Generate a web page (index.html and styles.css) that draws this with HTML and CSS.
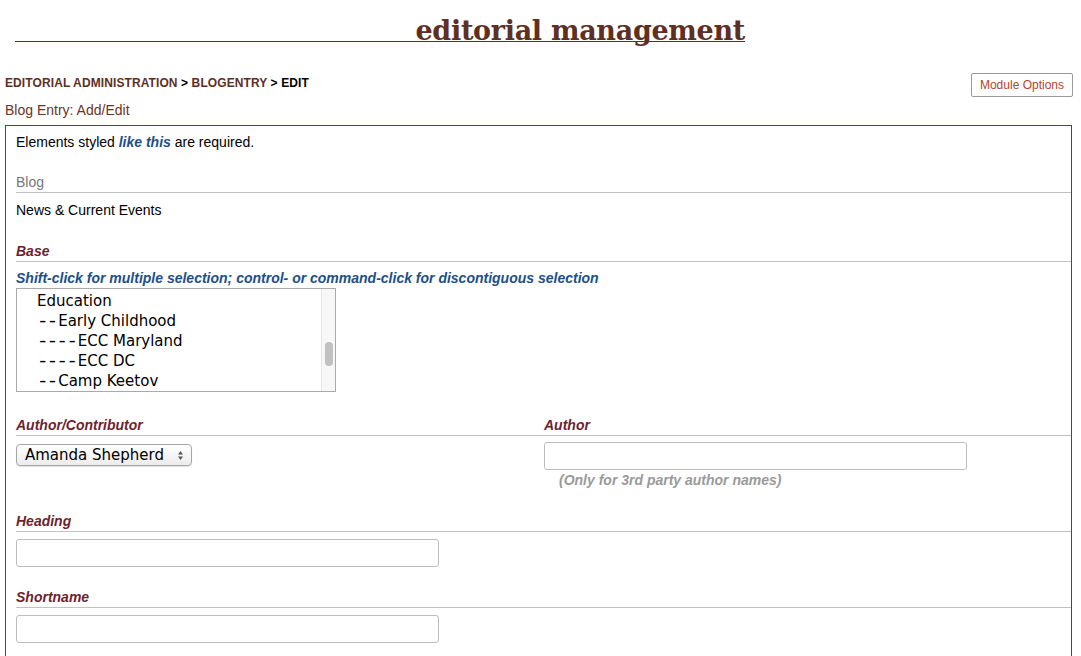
FILE: index.html
```html
<!DOCTYPE html>
<html>
<head>
<meta charset="utf-8">
<title>Editorial Management</title>
<link rel="stylesheet" href="styles.css">
</head>
<body>
<div class="page">
  <h1 class="site-title">editorial management</h1>

  <div class="crumb-row">
    <div class="crumbs"><a href="#">EDITORIAL ADMINISTRATION</a> &gt; <a href="#">BLOGENTRY</a> &gt; EDIT</div>
    <button class="module-btn">Module Options</button>
  </div>

  <div class="page-sub">Blog Entry: Add/Edit</div>

  <div class="form-box">
    <div class="req-note">Elements styled <span class="req">like this</span> are required.</div>

    <div class="field blog-field">
      <div class="label plain">Blog</div>
      <div class="value">News &amp; Current Events</div>
    </div>

    <div class="field base-field">
      <div class="label">Base</div>
      <div class="hint-blue">Shift-click for multiple selection; control- or command-click for discontiguous selection</div>
      <div class="listbox">
        <div class="options">
          <div class="opt">Education</div>
          <div class="opt"><span class="dash">--</span>Early Childhood</div>
          <div class="opt"><span class="dash">----</span>ECC Maryland</div>
          <div class="opt"><span class="dash">----</span>ECC DC</div>
          <div class="opt"><span class="dash">--</span>Camp Keetov</div>
        </div>
        <div class="scrollbar"><div class="thumb"></div></div>
      </div>
    </div>

    <div class="field two-col">
      <div class="col">
        <div class="label">Author/Contributor</div>
        <div class="select">
          <span class="select-text">Amanda Shepherd</span>
          <span class="arrows">
            <svg width="7" height="11" viewBox="0 0 7 11"><path d="M3.5 1 L6 4.5 H1 Z" fill="#555"/><path d="M3.5 10 L6 6.5 H1 Z" fill="#555"/></svg>
          </span>
        </div>
      </div>
      <div class="col">
        <div class="label">Author</div>
        <div class="input author-input"></div>
        <div class="hint-gray">(Only for 3rd party author names)</div>
      </div>
    </div>

    <div class="field heading-field">
      <div class="label">Heading</div>
      <div class="input"></div>
    </div>

    <div class="field short-field">
      <div class="label">Shortname</div>
      <div class="input"></div>
    </div>
  </div>
</div>
</body>
</html>
```

FILE: styles.css
```css
html, body {
  margin: 0;
  padding: 0;
  background: #fff;
}

body {
  font-family: "Liberation Sans", Arial, sans-serif;
  color: #000;
}

.page {
  padding: 0 9px 0 5px;
}

.site-title {
  margin: 0 0 0 10px;
  width: 730px;
  height: 23px;
  padding-top: 18px;
  line-height: 25px;
  font-family: "DejaVu Serif", serif;
  font-weight: bold;
  font-size: 27px;
  color: #5e3023;
  text-align: right;
  border-bottom: 1px solid #5e3023;
  letter-spacing: -0.3px;
}

.crumb-row {
  display: flex;
  justify-content: space-between;
  align-items: flex-start;
  margin-top: 32px;
}

.crumbs {
  margin-top: 2px;
  font-size: 12px;
  line-height: 14px;
  font-weight: bold;
  color: #000;
  letter-spacing: 0.1px;
}

.crumbs a {
  color: #5e3023;
  text-decoration: none;
}

.module-btn {
  margin-top: -1px;
  margin-right: -1px;
  height: 24px;
  padding: 0 8px;
  border: 1px solid #9a9a9a;
  border-radius: 2px;
  background: #fff;
  color: #b5452a;
  font-family: "Liberation Sans", Arial, sans-serif;
  font-size: 12px;
}

.page-sub {
  margin-top: 5px;
  font-size: 14px;
  line-height: 16px;
  color: #6b3526;
}

.form-box {
  margin-top: 7px;
  border: 1px solid #713a2b;
  padding: 8px 0 60px 10px;
}

.req-note {
  font-size: 14px;
  line-height: 16px;
}

.req {
  color: #1c4f8a;
  font-weight: bold;
  font-style: italic;
}

.label {
  font-size: 14px;
  line-height: 16px;
  padding-bottom: 2px;
  border-bottom: 1px solid #c2c2c2;
  color: #6d1f2e;
  font-weight: bold;
  font-style: italic;
}

.label.plain {
  color: #777;
  font-weight: normal;
  font-style: normal;
}

.field {
  margin-top: 23px;
}

.blog-field {
  margin-top: 24px;
}

.base-field {
  margin-top: 25px;
}

.value {
  margin-top: 9px;
  font-size: 14px;
  line-height: 16px;
}

.hint-blue {
  margin-top: 9px;
  font-size: 14px;
  line-height: 15px;
  font-weight: bold;
  font-style: italic;
  color: #1c4f8a;
}

.listbox {
  margin-top: 2px;
  width: 318px;
  height: 102px;
  border: 1px solid #a9a9a9;
  display: flex;
  overflow: hidden;
}

.options {
  flex: 1;
  padding: 2px 0 0 20px;
  font-family: "DejaVu Sans", sans-serif;
  font-size: 15px;
  line-height: 20px;
}

.opt {
  height: 20px;
  white-space: nowrap;
}

.dash {
  font-family: "Liberation Mono", monospace;
  font-size: 19px;
  line-height: 0;
  letter-spacing: -1.6px;
  margin-right: 1.6px;
  vertical-align: -1px;
}

.scrollbar {
  width: 13px;
  background: #f7f7f7;
  border-left: 1px solid #e6e6e6;
  position: relative;
}

.thumb {
  position: absolute;
  left: 3px;
  top: 53px;
  width: 8px;
  height: 24px;
  border-radius: 4px;
  background: #c1c1c1;
}

.two-col {
  display: grid;
  grid-template-columns: 528px 1fr;
  margin-top: 25px;
}

.select {
  margin-top: 8px;
  height: 20px;
  width: 159px;
  border: 1px solid #a6a6a6;
  border-radius: 4px;
  background: linear-gradient(#ffffff, #ececec);
  box-shadow: 0 1px 1px rgba(0,0,0,0.12);
  display: flex;
  align-items: center;
  justify-content: space-between;
  padding: 0 7px 0 8px;
}

.select-text {
  font-family: "DejaVu Sans", sans-serif;
  font-size: 15px;
  line-height: 20px;
}

.arrows {
  display: flex;
  align-items: center;
}

.input {
  margin-top: 7px;
  width: 421px;
  height: 26px;
  border: 1px solid #bdbdbd;
  border-radius: 3px;
  background: #fff;
}

.author-input {
  margin-top: 6px;
}

.hint-gray {
  margin-top: 3px;
  padding-left: 15px;
  font-size: 14px;
  line-height: 15px;
  font-weight: bold;
  font-style: italic;
  color: #9a9a9a;
}

.heading-field {
  margin-top: 25px;
}

.short-field {
  margin-top: 22px;
}
```
